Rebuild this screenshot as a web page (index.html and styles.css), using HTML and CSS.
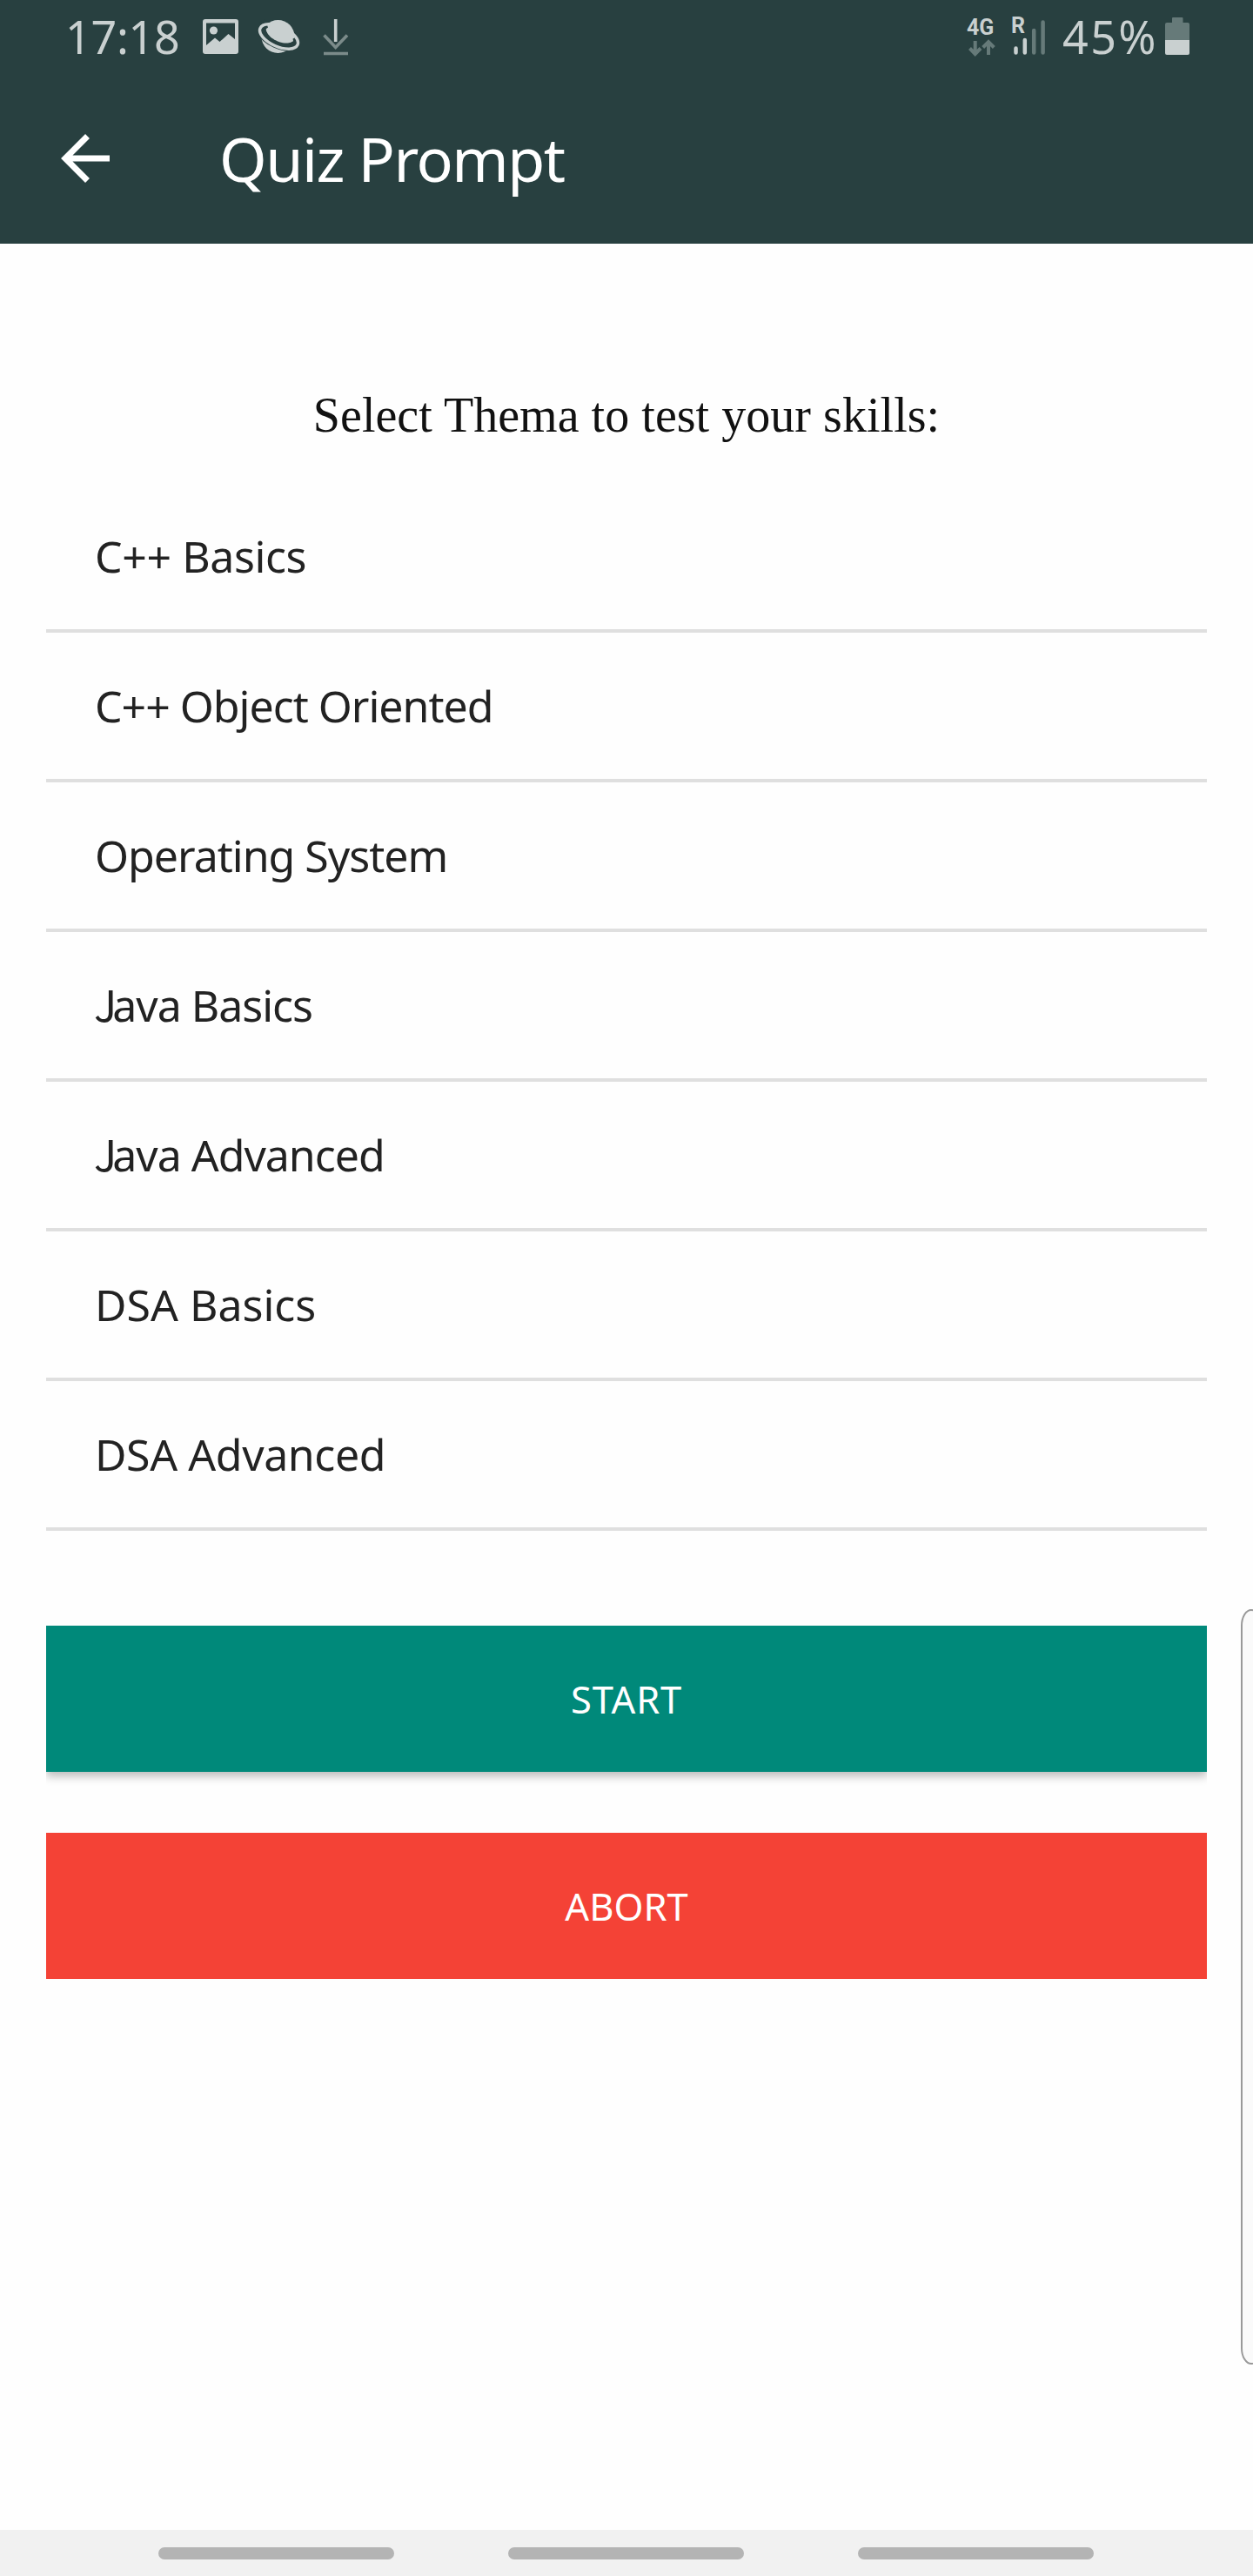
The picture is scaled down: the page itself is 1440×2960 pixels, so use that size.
FILE: index.html
```html
<!DOCTYPE html>
<html lang="en">
<head>
<meta charset="utf-8">
<title>Quiz Prompt</title>
<link rel="stylesheet" href="styles.css">
</head>
<body>
<div class="screen">
  <header class="top">
    <div class="status">
      <span class="clock">17:18</span>
      <svg class="icon-image" width="41" height="40" viewBox="0 0 41 40"><path fill="currentColor" fill-rule="evenodd" d="M3 0H38Q41 0 41 3V37Q41 40 38 40H3Q0 40 0 37V3Q0 0 3 0ZM4 4.500V30L14 21.500L19.500 26L29.500 17L37 23V4.500Z"/><circle cx="12.500" cy="13" r="4.600" fill="currentColor"/></svg>
      <svg class="icon-planet" width="49" height="40" viewBox="0 0 49 40"><circle cx="23.500" cy="20" r="19" fill="currentColor"/><g transform="rotate(24 24.500 20)"><path fill="none" stroke="#284040" stroke-width="10" d="M6 12C-2 18 4 29 24.500 29S51 18 43 12"/><ellipse cx="24.500" cy="20" rx="23.500" ry="11.500" fill="none" stroke="currentColor" stroke-width="3.400"/><path fill="currentColor" d="M8 18C12 28 37 28 41 18L35 6L14 6Z"/></g></svg>
      <svg class="icon-download" width="30" height="42" viewBox="0 0 30 42" fill="none" stroke-width="3.600"><path stroke="#7b8b8a" d="M1.500 18.500L14.700 32.500L28 18.500M1 39.500H29"/><path stroke="currentColor" d="M14.700 0V26"/></svg>
      <div class="right">
        <div class="network">
          <span class="tag">4G</span>
          <svg width="31" height="20" viewBox="0 0 31 20" fill="none" stroke="#667a79" stroke-width="4"><path d="M7.700 2V16M1.500 10.500L7.700 17L14 10.500M23 18V4M16.700 9.500L23 3L29.300 9.500"/></svg>
        </div>
        <div class="signal">
          <span class="tag roaming">R</span>
          <svg width="40" height="44" viewBox="0 0 40 44" stroke-width="4.500" stroke-linecap="round"><path stroke="currentColor" d="M4.500 35.500V40.500M14.800 26V40.500"/><path stroke="#667a79" d="M25.200 15V40.500M35.600 5.500V40.500"/></svg>
        </div>
        <span class="percent">45%</span>
        <svg class="battery" width="28" height="43" viewBox="0 0 28 43"><path fill="#667a79" d="M8 1Q8 0 9 0H19.500Q20.500 0 20.500 1V6H26Q28 6 28 8V26H0V8Q0 6 2 6H8Z"/><path fill="currentColor" d="M0 26H28V41Q28 43 26 43H2Q0 43 0 41Z"/></svg>
      </div>
    </div>
    <div class="appbar">
      <svg class="back" width="56" height="58" viewBox="0 0 56 58" fill="none" stroke="#fff" stroke-width="7"><path d="M30.500 3.500L5 29L30.500 54.500M5 29H56"/></svg>
      <h1 class="title">Quiz Prompt</h1>
    </div>
  </header>
  <main class="content">
    <p class="prompt">Select Thema to test your skills:</p>
    <ul class="topics">
      <li class="topic">C++ Basics</li>
      <li class="topic long">C++ Object Oriented</li>
      <li class="topic long">Operating System</li>
      <li class="topic long"><span class="cap-j">J</span>ava Basics</li>
      <li class="topic long"><span class="cap-j">J</span>ava Advanced</li>
      <li class="topic wide">DSA Basics</li>
      <li class="topic">DSA Advanced</li>
    </ul>
    <div class="actions">
      <div class="raised"><button class="button start">START</button></div>
      <button class="button abort">ABORT</button>
    </div>
  </main>
  <nav class="navbar"><span class="pill"></span><span class="pill"></span><span class="pill"></span></nav>
  <div class="edge-panel"></div>
</div>
</body>
</html>
```
FILE: styles.css
```css
* {
  box-sizing: border-box;
  margin: 0;
  padding: 0;
}

body {
  font-family: "Noto Sans", "Open Sans", sans-serif;
  background: #fefefe;
}

svg {
  display: block;
  flex: none;
}

.screen {
  position: relative;
  display: flex;
  flex-direction: column;
  width: 1440px;
  height: 2960px;
  overflow: hidden;
}

.top {
  background: #284040;
}

.status {
  display: flex;
  height: 84px;
  padding-left: 75px;
  padding-right: 73px;
  color: #c9d0d0;
  font-size: 52px;
  line-height: 84px;
}

.clock {
  width: 158px;
  letter-spacing: -0.3px;
}

.icon-image {
  margin-top: 22px;
}

.icon-planet {
  margin: 22px 0 0 22px;
}

.icon-download {
  margin: 22px 0 0 26px;
}

.right {
  display: flex;
  margin-left: auto;
}

.network {
  width: 52px;
  padding-top: 17px;
}

.network svg {
  margin: -1px 0 0 2px;
}

.tag {
  display: block;
  font: bold 25px/29px Roboto, sans-serif;
}

.signal {
  position: relative;
  width: 58px;
  padding-top: 20px;
}

.roaming {
  position: absolute;
  top: 15px;
  left: -1px;
}

.percent {
  width: 118px;
  letter-spacing: 2.4px;
}

.battery {
  margin-top: 20px;
}

.appbar {
  display: flex;
  align-items: center;
  height: 196px;
  padding-left: 70px;
}

.title {
  margin-left: 126px;
  color: #fff;
  font-size: 70px;
  font-weight: 400;
  line-height: 196px;
  letter-spacing: -1.5px;
}

.content {
  flex: 1;
  padding: 165px 53px 0;
}

.prompt {
  color: #111;
  font: 56px/64px "Liberation Serif", serif;
  letter-spacing: 0.04px;
  text-align: center;
}

.topics {
  margin-top: 46px;
  list-style: none;
}

.topic {
  height: 172px;
  padding-left: 56px;
  border-bottom: 4px solid #dfdfdf;
  color: #222;
  font-size: 50px;
  line-height: 168px;
  letter-spacing: -0.4px;
}

.long {
  letter-spacing: -1px;
}

.wide {
  letter-spacing: 0;
}

.cap-j {
  margin: 0 -4px 0 -1px;
  font-family: "Noto Sans CJK JP", sans-serif;
  font-size: 49px;
  line-height: 1;
}

.actions {
  margin-top: 109px;
}

.raised {
  height: 238px;
  overflow: hidden;
}

.button {
  display: block;
  width: 100%;
  height: 168px;
  border: 0;
  color: #fff;
  font: 43.5px/168px "Noto Sans", sans-serif;
}

.start {
  background: #00897a;
  box-shadow: 0 5px 10px rgba(0, 0, 0, 0.27);
  letter-spacing: 0.8px;
}

.abort {
  background: #f44236;
}

.navbar {
  display: flex;
  gap: 131px;
  height: 53px;
  padding: 20px 0 0 182px;
  background: #f1f1f1;
}

.pill {
  width: 271px;
  height: 14px;
  border-radius: 7px;
  background: #b4b4b4;
}

.edge-panel {
  position: absolute;
  top: 1849px;
  right: -10px;
  width: 24px;
  height: 868px;
  border: 2px solid #999;
  border-radius: 14px / 22px;
  background: #fafafa;
}
```
